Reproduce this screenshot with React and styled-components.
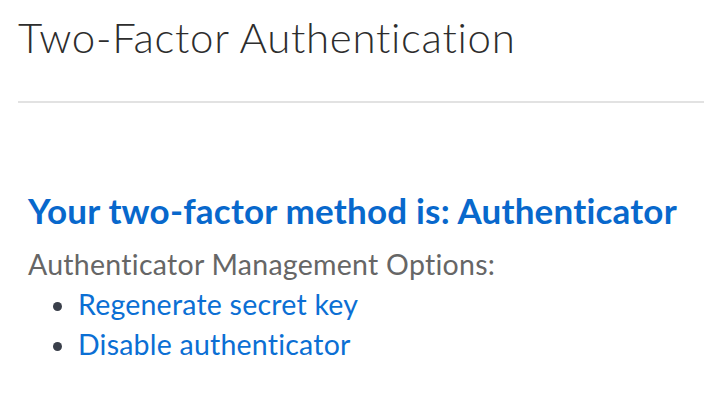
import React from "react";
import styled, { createGlobalStyle } from "styled-components";

const GlobalStyle = createGlobalStyle`
  html, body {
    margin: 0;
    padding: 0;
    background: #ffffff;
  }
  body {
    font-family: Lato, "Open Sans", sans-serif;
  }
`;

const App = () => {
  return (
    <>
      <GlobalStyle />
      <Page>
        <Header>
          <Title>Two-Factor Authentication</Title>
        </Header>
        <Section>
          <MethodTitle>Your two-factor method is: Authenticator</MethodTitle>
          <OptionsLabel>Authenticator Management Options:</OptionsLabel>
          <OptionList>
            <li>
              <OptionLink href="#">Regenerate secret key</OptionLink>
            </li>
            <li>
              <OptionLink href="#">Disable authenticator</OptionLink>
            </li>
          </OptionList>
        </Section>
      </Page>
    </>
  );
};

export default App;

const Page = styled.div`
  width: 704px;
  height: 400px;
  padding-left: 18px;
  box-sizing: border-box;
  overflow: hidden;
`;

const Header = styled.div`
  padding-top: 12px;
  padding-bottom: 39px;
  border-bottom: 2px solid #e2e2e2;
`;

const Title = styled.h1`
  margin: 0;
  font-size: 42px;
  font-weight: 300;
  line-height: 50px;
  letter-spacing: 0.7px;
  color: #2d2d2d;
`;

const Section = styled.div`
  padding: 86px 0 0 10px;
`;

const MethodTitle = styled.h2`
  margin: 0 0 13px;
  font-size: 35px;
  font-weight: 700;
  line-height: 42px;
  letter-spacing: 0.2px;
  color: #0868cc;
`;

const OptionsLabel = styled.p`
  margin: 0;
  font-size: 28.5px;
  line-height: 40px;
  letter-spacing: 0.27px;
  color: #666666;
`;

const OptionList = styled.ul`
  margin: 0;
  padding-left: 50px;
  font-size: 28.5px;
  line-height: 40px;
  letter-spacing: 0.22px;
  color: #3a3f4a;
`;

const OptionLink = styled.a`
  color: #0b6fd4;
  text-decoration: none;
`;
